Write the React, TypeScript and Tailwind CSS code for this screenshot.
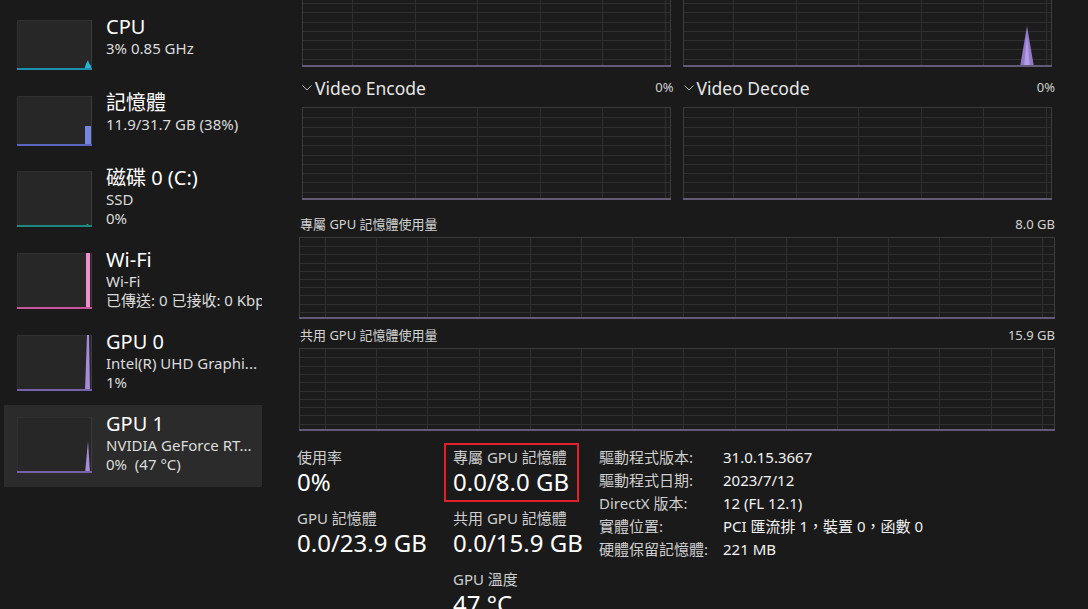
import React from "react";

type GridProps = {
  w: number;
  h: number;
  sx: number;
  ox: number;
  rows: number;
  oy?: number;
  children?: React.ReactNode;
};

function Grid({ w, h, sx, ox, rows, oy = 0, children }: GridProps) {
  const vs: number[] = [];
  for (let x = ox; x < w - 2; x += sx) vs.push(Math.round(x) + 0.5);
  const hs: number[] = [];
  for (let i = 1; i < rows; i++) hs.push(Math.round((i * h) / rows + oy) + 0.5);
  return (
    <svg width={w} height={h} className="block shrink-0">
      <rect x={0} y={0} width={w} height={h} fill="#1c1c1c" />
      {vs.map((x) => (
        <line key={"v" + x} x1={x} x2={x} y1={0} y2={h} stroke="#2f2f2f" />
      ))}
      {hs.map((y) => (
        <line key={"h" + y} x1={0} x2={w} y1={y} y2={y} stroke="#2f2f2f" />
      ))}
      <rect x={0.5} y={0.5} width={w - 1} height={h - 1} fill="none" stroke="#3b3b3b" />
      {children}
      <line x1={0} x2={w} y1={h - 1} y2={h - 1} stroke="#625b78" strokeWidth={2} />
    </svg>
  );
}

const palette: Record<string, { line: string; fill: string }> = {
  cpu: { line: "#1d8fae", fill: "#27b4d8" },
  mem: { line: "#5866c0", fill: "#7386e0" },
  disk: { line: "#1b8a7c", fill: "#2aa090" },
  wifi: { line: "#c9559e", fill: "#ee8fcb" },
  gpu0: { line: "#7662a8", fill: "#a68bd9" },
  gpu1: { line: "#7662a8", fill: "#a68bd9" },
};

function Thumb({ kind, h }: { kind: string; h: number }) {
  const w = 75;
  const c = palette[kind];
  let shape: React.ReactNode = null;
  if (kind === "cpu") {
    shape = <polygon points={`67,${h} 69,${h - 6} 70,${h - 8} 71,${h - 10} 72,${h - 7} 74,${h - 4} 74,${h}`} fill={c.fill} />;
  } else if (kind === "mem") {
    shape = <rect x={68} y={h - 20} width={6} height={20} fill={c.fill} />;
  } else if (kind === "disk") {
    shape = <polygon points={`68,${h} 70,${h - 3} 71,${h - 3} 73,${h}`} fill={c.fill} />;
  } else if (kind === "wifi") {
    shape = <rect x={69} y={0} width={4} height={h} fill={c.fill} />;
  } else if (kind === "gpu0") {
    shape = <polygon points={`68,${h} 70,0 72,0 73,${h}`} fill={c.fill} />;
  } else if (kind === "gpu1") {
    shape = <polygon points={`68,${h} 71,${h - 32} 73,${h}`} fill={c.fill} />;
  }
  return (
    <svg width={w} height={h} className="block shrink-0">
      <rect x={0} y={0} width={w} height={h} fill="#272727" />
      <rect x={0.5} y={0.5} width={w - 1} height={h - 1} fill="none" stroke="#303030" />
      <line x1={74.5} x2={74.5} y1={0} y2={h} stroke="#3c3c3c" />
      {shape}
      <line x1={0} x2={w} y1={h - 1} y2={h - 1} stroke={c.line} strokeWidth={2} />
    </svg>
  );
}

type Item = { title: string; lines: string[]; kind: string; selected?: boolean };

const items: Item[] = [
  { title: "CPU", lines: ["3% 0.85 GHz"], kind: "cpu" },
  { title: "記憶體", lines: ["11.9/31.7 GB (38%)"], kind: "mem" },
  { title: "磁碟 0 (C:)", lines: ["SSD", "0%"], kind: "disk" },
  { title: "Wi-Fi", lines: ["Wi-Fi", "已傳送: 0 已接收: 0 Kbps"], kind: "wifi" },
  { title: "GPU 0", lines: ["Intel(R) UHD Graphi...", "1%"], kind: "gpu0" },
  { title: "GPU 1", lines: ["NVIDIA GeForce RT...", "0%  (47 °C)"], kind: "gpu1", selected: true },
];

function SideItem({ it }: { it: Item }) {
  const three = it.lines.length > 1;
  return (
    <div
      className={
        "flex items-start shrink-0 pl-[13px] gap-[14px] overflow-hidden w-[258px] " +
        (three ? "h-[82px] pt-[12px] " : "h-[76px] pt-[13px] ") +
        (it.selected ? "bg-[#2b2b2b]" : "")
      }
    >
      <Thumb kind={it.kind} h={three ? 56 : 50} />
      <div className="-mt-[5px] flex flex-col whitespace-nowrap">
        <div className="text-[20px] leading-[24px] text-white">{it.title}</div>
        {it.lines.map((l, i) => (
          <div key={i} className="text-[15px] leading-[19px] text-[#dcdcdc] whitespace-pre">
            {l}
          </div>
        ))}
      </div>
    </div>
  );
}

function Chevron() {
  return (
    <svg width={10} height={6} className="block shrink-0">
      <polyline points="0.5,0.5 5,5 9.5,0.5" fill="none" stroke="#b8b8b8" strokeWidth={1} />
    </svg>
  );
}

function EngineLabel({ title }: { title: string }) {
  return (
    <div className="w-[373.5px] flex items-center">
      <div className="pl-[2px] pr-[3px]">
        <Chevron />
      </div>
      <div className="text-[17.5px] leading-[22px] text-[#e6e6e6]">{title}</div>
      <div className="ml-auto text-[13px] text-[#d0d0d0]">0%</div>
    </div>
  );
}

function Stat({ label, value }: { label: string; value: string }) {
  return (
    <div className="flex flex-col whitespace-nowrap shrink-0">
      <div className="text-[15px] leading-[20px] text-[#cfcfcf]">{label}</div>
      <div className="text-[24px] leading-[30px] text-white">{value}</div>
    </div>
  );
}

const info: [string, string][] = [
  ["驅動程式版本:", "31.0.15.3667"],
  ["驅動程式日期:", "2023/7/12"],
  ["DirectX 版本:", "12 (FL 12.1)"],
  ["實體位置:", "PCI 匯流排 1，裝置 0，函數 0"],
  ["硬體保留記憶體:", "221 MB"],
];

export default function App() {
  return (
    <div className="w-[1088px] h-[609px] overflow-hidden bg-[#1a1a1a] flex items-start text-white font-['Noto_Sans','Noto_Sans_CJK_TC',sans-serif]">
      <aside className="w-[297px] shrink-0 pt-[7px] pl-[4px] flex flex-col">
        {items.map((it) => (
          <SideItem key={it.title} it={it} />
        ))}
      </aside>
      <main className="flex-1 -mt-[26px] flex flex-col">
        <div className="flex shrink-0 gap-[12px] pl-[5px]">
          <Grid w={369} h={93} sx={62.5} ox={50} rows={10} oy={1} />
          <Grid w={369} h={93} sx={62.5} ox={50} rows={10} oy={1}>
            <polygon points="337,93 344,52 351,93" fill="#9479c9" />
            <polygon points="341,93 344,62 347,93" fill="#b49ce4" />
          </Grid>
        </div>
        <div className="flex shrink-0 gap-[8px] pl-[3px] h-[40px] items-center pt-[2px]">
          <EngineLabel title="Video Encode" />
          <EngineLabel title="Video Decode" />
        </div>
        <div className="flex shrink-0 gap-[12px] pl-[5px]">
          <Grid w={369} h={93} sx={62.5} ox={50} rows={10} oy={1} />
          <Grid w={369} h={93} sx={62.5} ox={50} rows={10} oy={1} />
        </div>
        <div className="h-[37px] shrink-0 w-[758px] flex items-end justify-between pl-[3px] pb-[5px] text-[13px] leading-[16px] text-[#d4d4d4]">
          <span>專屬 GPU 記憶體使用量</span>
          <span>8.0 GB</span>
        </div>
        <div className="pl-[2px] shrink-0">
          <Grid w={756} h={82} sx={51.2} ox={26} rows={10} oy={1} />
        </div>
        <div className="h-[29px] shrink-0 w-[758px] flex items-end justify-between pl-[3px] pb-[5px] text-[13px] leading-[16px] text-[#d4d4d4]">
          <span>共用 GPU 記憶體使用量</span>
          <span>15.9 GB</span>
        </div>
        <div className="pl-[2px] shrink-0">
          <Grid w={756} h={83} sx={51.2} ox={26} rows={10} oy={1} />
        </div>
        <div className="flex items-start shrink-0 pt-[16px]">
          <div className="w-[156px] flex flex-col gap-[11px]">
            <Stat label="使用率" value="0%" />
            <Stat label="GPU 記憶體" value="0.0/23.9 GB" />
          </div>
          <div className="w-[146px] flex flex-col gap-[11px]">
            <div className="relative">
              <Stat label="專屬 GPU 記憶體" value="0.0/8.0 GB" />
              <div className="absolute -left-[9px] -top-[4px] w-[135px] h-[59px] border-2 border-[#e0202a]" />
            </div>
            <Stat label="共用 GPU 記憶體" value="0.0/15.9 GB" />
            <Stat label="GPU 溫度" value="47 °C" />
          </div>
          <div className="-mt-[1px] grid content-start grid-cols-[124px_auto] text-[15px] leading-[23px] whitespace-nowrap">
            {info.map(([k, v]) => (
              <React.Fragment key={k}>
                <div className="text-[#cfcfcf]">{k}</div>
                <div className="text-[#f2f2f2]">{v}</div>
              </React.Fragment>
            ))}
          </div>
        </div>
      </main>
    </div>
  );
}
